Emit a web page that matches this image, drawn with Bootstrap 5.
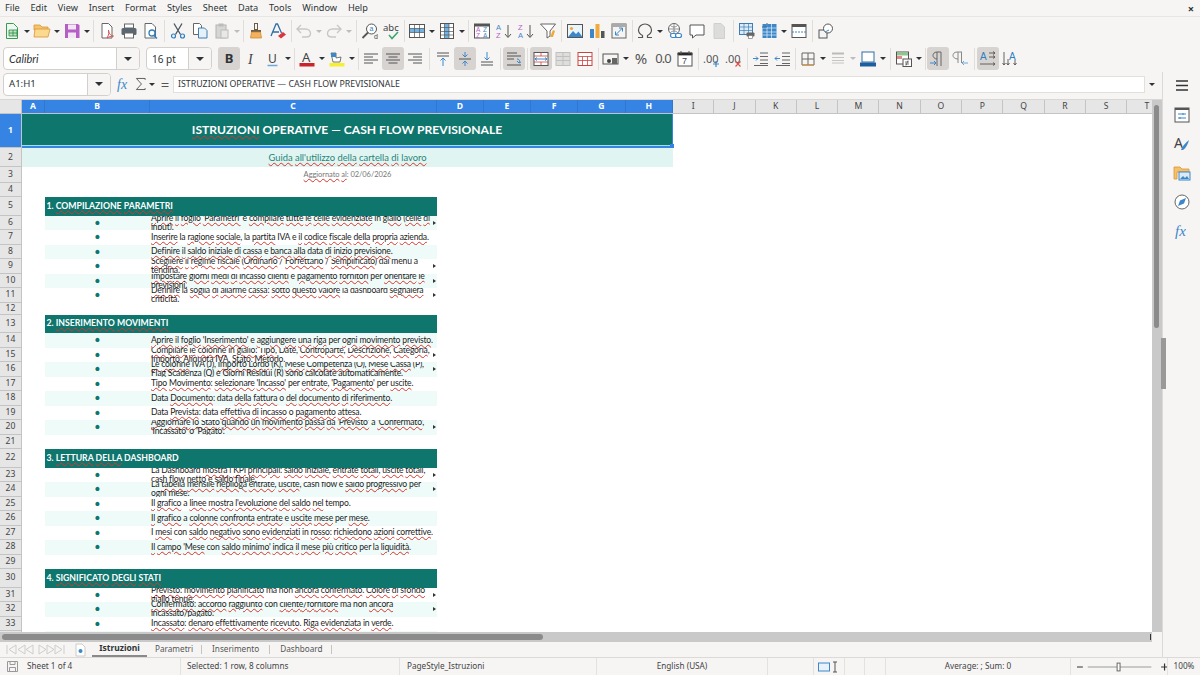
<!DOCTYPE html>
<html lang="it">
<head>
<meta charset="UTF-8">
<title>Cash flow previsionale</title>
<link href="https://cdn.jsdelivr.net/npm/bootstrap@5.3.0/dist/css/bootstrap.min.css" rel="stylesheet">
<style>
html,body{margin:0;height:675px;overflow:hidden;background:#f6f5f4}
body{font-family:"Noto Sans",sans-serif;font-size:10px;color:#2e3436;line-height:1}
.shell{width:1200px;height:675px}
.menu-bar{height:17px;padding-left:5px;gap:10.8px;border-bottom:1px solid #e8e6e3;font-size:9.2px}
.menu-close{margin-left:auto;margin-right:6px;font-size:11px;font-weight:700}
.tool-1{height:28px;padding-left:1px}
.tool-2{height:27px;padding-left:3px}
.ti{width:22px;height:23px;flex:none;display:flex;align-items:center;justify-content:center;border-radius:3px}
.ti svg{width:18px;height:18px}
.ti.on{background:#d6d3d0}
.ta{width:8px;flex:none;display:flex;justify-content:center}
.ta::after{content:"";border:3px solid transparent;border-top:3.5px solid #2e3436;border-bottom:0}
.ta.off::after{border-top-color:#bdbcba}
.ts{flex:none;width:5px;display:flex;justify-content:center;height:22px}
.ts::after{content:"";width:1px;background:#e0dedb}
.ts4{width:4px}.ts6{width:6px}.ts3{width:3px}
.combo{height:23px;background:#fff;border:1px solid #d3cfcb;border-radius:4px;flex:none;overflow:hidden}
.combo-text{flex:1;padding-left:5px;font-size:10px}
.combo-arrow{width:23px;height:100%;background:#f6f5f4;border-left:1px solid #d3cfcb;display:flex;align-items:center;justify-content:center}
.combo-arrow::after{content:"";border:4px solid transparent;border-top:4px solid #2e3436;border-bottom:0}
.font-box{width:137px}.size-box{width:66px;margin-left:6px;margin-right:6px}
.calibri{font-family:Lato,sans-serif;font-style:italic;font-size:11px}
.name-box{width:108px;margin-left:3px}
.formula-bar{height:28px;flex:none;padding-bottom:3px;border-bottom:1px solid #d9d7d4}
.formula-input{width:972px;height:17px;background:#fff;border:1px solid #e2e0dd;font-size:8.8px;padding-left:4px;flex:none;display:flex;align-items:center;white-space:nowrap}
.fb{flex:none;display:flex;align-items:center;justify-content:center}
.left-col{width:1162px;flex:none}
.side-bar{width:38px;flex:none;border-left:1px solid #dcdad7}
.side-icon{height:29.2px;flex:none;display:flex;align-items:center;justify-content:center}
.side-icon:first-child{height:28px}
.side-icon svg{width:18px;height:18px}
.sheet-wrap{height:532px;flex:none;overflow:hidden;position:relative}
.sheet-grid{width:1152px;background:#fff;flex:none;overflow:hidden}
.col-head{height:14px;flex:none;font-size:8.6px;color:#444;background:#e6e6e6;border-bottom:1px solid #c4c4c4}
.ch{flex:none;height:100%;display:flex;align-items:center;justify-content:center;border-right:1px solid #c4c4c4}
.ch.sel{background:#3584e4;color:#fff;font-weight:700;border-right:1px solid #3077d0}
.corner{width:22px}
.rw{display:flex;height:14.5px;flex:none;overflow:hidden}
.rh{width:22px;flex:none;background:#e6e6e6;border-right:1px solid #c4c4c4;border-bottom:1px solid #c4c4c4;display:flex;align-items:center;justify-content:center;font-size:8.6px;color:#444}
.rh.sel{background:#3584e4;color:#fff;font-weight:700}
.r34{height:34px}.r19{height:19px}.r16{height:16px}.r14{height:14px}.r18{height:18.5px}.r12{height:12px}
.ca{width:23px;flex:none}
.cb{width:105px;flex:none;text-align:center;color:#0f766e;font-size:14px;display:flex;align-items:center;justify-content:center;font-family:"DejaVu Sans",sans-serif}
.cc{width:287px;flex:none;font-family:Lato,sans-serif;font-size:8.6px;line-height:9.2px;letter-spacing:-.2px;color:#1c1c1c;display:flex;align-items:center;padding-left:1px;white-space:nowrap;overflow:hidden;position:relative}
.st .cb,.st .cc{background:#effbf9}
.clip::after{content:"";position:absolute;right:1px;top:5px;border:2.5px solid transparent;border-left:3px solid #333;border-right:0}
.head-cell{width:392px;flex:none;background:#0f766e;color:#fff;font-family:Lato,sans-serif;font-weight:700;font-size:8.7px;display:flex;align-items:center;padding-left:1.5px;white-space:nowrap}
.title-cell{width:651px;flex:none;background:#0f766e;color:#fff;font-family:Lato,sans-serif;font-weight:700;font-size:12.1px;display:flex;align-items:center;justify-content:center;border-bottom:2px solid #3584e4;border-right:1px solid #3584e4;box-shadow:inset 0 -1px 0 #9fe0e8;position:relative}
.title-cell::after{content:"";position:absolute;right:-2px;bottom:-2px;width:4px;height:4px;background:#3584e4}
.sub-cell{width:651px;flex:none;background:#e0f5f2;color:#1f8377;font-family:Lato,sans-serif;font-size:9.35px;display:flex;align-items:center;justify-content:center}
.date-cell{width:651px;flex:none;color:#777;font-family:Lato,sans-serif;font-size:7.5px;letter-spacing:-.06px;display:flex;align-items:center;justify-content:center}
u{text-decoration:underline wavy #d9342b 1px;text-underline-offset:1px}
.v-scroll{width:10px;flex:none;background:#c9c9c9;position:relative}
.v-thumb{position:absolute;left:2px;width:5px;top:5px;height:223px;background:#8b8b8b;border-radius:3px}
.drag-handle{position:absolute;left:1161px;top:338px;width:5px;height:51px;background:#999;z-index:3}
.h-scroll{height:10px;flex:none;background:#c9c9c9;width:1152px;position:relative}
.h-thumb{position:absolute;left:2px;top:2px;width:541px;height:6px;background:#8b8b8b;border-radius:3px}
.h-end{position:absolute;right:1px;top:2px;width:1px;height:6px;background:#333}
.tab-bar{height:15px;flex:none;font-size:8.2px;padding-left:6px}
.tab-nav{width:63px;flex:none;display:flex}
.tab-add{width:23px;flex:none;display:flex;justify-content:center}
.sheet-tab{height:15px;display:flex;align-items:center;color:#555}
.sheet-tab.now{font-weight:700;font-size:8.5px;color:#2e3436;border-bottom:2px solid #8a8a8a;width:55px;justify-content:center}
.tab-sep{width:1px;height:9px;background:#c6c4c1;flex:none}
.status-bar{height:18px;flex:none;border-top:1px solid #dcdad7;font-size:8.2px;color:#444}
.sc{height:100%;flex:none;display:flex;align-items:center;border-right:1px solid #e4e2df;white-space:nowrap;overflow:hidden}
.main-row{height:585px;flex:none}
.glyph-b{font-size:13px}
.glyph-pct{font-size:15px;color:#555}
.glyph-num{font-size:13px;color:#555;letter-spacing:-1px}
.name-text{font-size:9.6px}
.fx-btn{width:22px;margin-left:2px}
.sum-btn{width:12px}
.sum-arrow{width:10px}
.eq-btn{width:16px;font-size:15px;color:#555}
.fx-more{width:14px}
.w-a{width:23px}.w-b{width:105px}.w-c{width:287px}.w-d{width:47px}.w-g{width:47.5px}.w-i{width:41.3px}
.w-t{width:26px;justify-content:flex-end;padding-right:4px;border-right:0}
.tab-p{margin-left:8px;margin-right:8px}
.tab-i{margin-left:10px;margin-right:10px}
.tab-d{margin-left:10px;margin-right:8px}
.st-1{width:181px;padding-left:6px;gap:8px}
.st-2{width:219px;padding-left:6px}
.st-3{width:197px;padding-left:7px}
.st-4{width:171px}
.st-5{width:46px}
.st-6{width:31px}
.st-7{width:20px}
.st-8{width:21px}
.st-9{width:185px}
.st-10{width:97px;padding-left:6px}
.st-11{width:32px;border-right:0}
</style>
</head>
<body>
<div class="shell d-flex flex-column">
  <nav class="menu-bar d-flex align-items-center">
    <span>File</span><span>Edit</span><span>View</span><span>Insert</span><span>Format</span><span>Styles</span><span>Sheet</span><span>Data</span><span>Tools</span><span>Window</span><span>Help</span>
    <span class="menu-close">×</span>
  </nav>

  <div class="tool-1 d-flex align-items-center">
    <span class="ti"><svg viewBox="0 0 18 18"><path d="M3.5 1.500h7l4 4v11h-11z" fill="#eef7f0" stroke="#3a9a4e"/><path d="M6 8h8v6H6zM6 11h8M10 8v6" fill="#bfe3c6" stroke="#2f8a43" stroke-width=".8"/></svg></span><span class="ta"></span>
    <span class="ti"><svg viewBox="0 0 18 18"><path d="M1 5V3h6l2 2h6v3H1z" fill="#f4c56b" stroke="#d9953a" stroke-width=".8"/><path d="M1 15l1-8h15l-2 8z" fill="#fbd98f" stroke="#d9953a" stroke-width=".8"/></svg></span><span class="ta"></span>
    <span class="ti"><svg viewBox="0 0 18 18"><path d="M2 2h13l1.500 1.500V16H2z" fill="#b45fc4"/><rect x="5" y="2.500" width="8" height="5" fill="#f3e5f6"/><rect x="5" y="10.500" width="8" height="5.500" fill="#f3e5f6"/></svg></span><span class="ta"></span>
    <span class="ts"></span>
    <span class="ti"><svg viewBox="0 0 18 18"><path d="M4 1.500h6.500l3.500 3.500v11H4z" fill="#fff" stroke="#666"/><path d="M9 16c2-3 2-6 1.500-8 0 3 2 6 5 6-2 0-5 1-6.500 2z" fill="none" stroke="#d9534f"/></svg></span>
    <span class="ti"><svg viewBox="0 0 18 18"><rect x="4.500" y="2" width="9" height="4" fill="#fff" stroke="#666"/><rect x="1.500" y="6" width="15" height="7" rx="1.500" fill="#5b6770"/><rect x="4.500" y="11" width="9" height="5" fill="#fff" stroke="#666"/></svg></span>
    <span class="ti"><svg viewBox="0 0 18 18"><path d="M3 1.500h7l3.500 3.500v11H3z" fill="#fff" stroke="#666"/><circle cx="10" cy="11" r="3" fill="none" stroke="#2f7fc1" stroke-width="1.300"/><path d="M12 13.500l3 3" stroke="#2f7fc1" stroke-width="1.500"/></svg></span>
    <span class="ts"></span>
    <span class="ti"><svg viewBox="0 0 18 18"><path d="M5 1.500l6.500 11M13 1.500l-6.500 11" stroke="#4a5560" stroke-width="1.300"/><circle cx="4.500" cy="14" r="2" fill="none" stroke="#2f7fc1" stroke-width="1.200"/><circle cx="13.500" cy="14" r="2" fill="none" stroke="#2f7fc1" stroke-width="1.200"/></svg></span>
    <span class="ti"><svg viewBox="0 0 18 18"><path d="M2.500 1.500h6l2 2v9h-8z" fill="#fff" stroke="#666"/><path d="M7.500 6h6l2.500 2.500v7.500H7.500z" fill="#e5f0f9" stroke="#3d7fb5"/></svg></span>
    <span class="ti"><svg viewBox="0 0 18 18"><rect x="3" y="3" width="10" height="13" fill="#d6d6d4" stroke="#b4b4b2"/><rect x="5.500" y="1.500" width="5" height="3" fill="#bcbcba"/><rect x="8" y="8" width="7" height="8" fill="#e8e8e6" stroke="#bcbcba"/></svg></span><span class="ta off"></span>
    <span class="ts ts4"></span>
    <span class="ti"><svg viewBox="0 0 18 18"><rect x="7.500" y="1.500" width="3" height="6" fill="none" stroke="#6b5c48"/><path d="M4 8h10v2H4z" fill="#6b5c48"/><path d="M4.500 10h9l1 6h-11z" fill="#f2b25f" stroke="#c98526" stroke-width=".7"/></svg></span>
    <span class="ti"><svg viewBox="0 0 18 18"><path d="M2 14L7 2h1.500l4 9M4 10h6" fill="none" stroke="#2f6ea5" stroke-width="1.300"/><path d="M9 14l5-4 3 2.500-5 4z" fill="#d9363e"/></svg></span>
    <span class="ts ts4"></span>
    <span class="ti"><svg viewBox="0 0 18 18"><path d="M6 3L2 7l4 4M2.500 7h8c3 0 5 2 5 4.500S13.500 15 11 15H7" fill="none" stroke="#c8c8c6" stroke-width="1.400"/></svg></span><span class="ta off"></span>
    <span class="ti"><svg viewBox="0 0 18 18"><path d="M12 3l4 4-4 4M15.500 7h-8c-3 0-5 2-5 4.500S4.500 15 7 15h4" fill="none" stroke="#c8c8c6" stroke-width="1.400"/></svg></span><span class="ta off"></span>
    <span class="ts ts6"></span>
    <span class="ti"><svg viewBox="0 0 18 18"><circle cx="10.500" cy="7" r="5" fill="#fff" stroke="#555"/><path d="M7 10.500L1.500 16" stroke="#555" stroke-width="1.800"/><text x="8.500" y="9" font-size="7" font-family="Liberation Sans" fill="#2f7fc1">a</text><text x="13" y="17" font-size="7" font-family="Liberation Sans" fill="#444">d</text></svg></span>
    <span class="ti"><svg viewBox="0 0 18 18"><text x="0" y="9" font-size="9.500" font-family="Noto Sans" fill="#444">abc</text><path d="M6 13l3 3.500L15 10" fill="none" stroke="#3aa66a" stroke-width="1.500"/></svg></span>
    <span class="ts ts3"></span>
    <span class="ti"><svg viewBox="0 0 18 18"><rect x="1.500" y="2.500" width="15" height="13" fill="#fff" stroke="#555"/><rect x="2" y="6.500" width="14" height="4" fill="#6fb2e6"/><path d="M1.500 6.500h15M1.500 10.500h15M6.500 2.500v13M11.500 2.500v13" stroke="#555" stroke-width=".7"/></svg></span><span class="ta"></span>
    <span class="ti"><svg viewBox="0 0 18 18"><rect x="2.500" y="1.500" width="13" height="15" fill="#fff" stroke="#555"/><rect x="6.500" y="2" width="4.500" height="14" fill="#6fb2e6"/><path d="M2.500 5.500h13M2.500 9.500h13M2.500 13h13M6.500 1.500v15M11 1.500v15" stroke="#555" stroke-width=".7"/></svg></span><span class="ta"></span>
    <span class="ts"></span>
    <span class="ti"><svg viewBox="0 0 18 18"><rect x="1.500" y="2" width="15" height="14" fill="#fff" stroke="#555"/><rect x="1.500" y="2" width="15" height="2.500" fill="#555"/><text x="3" y="10" font-size="6.500" font-family="Liberation Sans" fill="#b45fc4">A</text><text x="3" y="15.500" font-size="6.500" font-family="Liberation Sans" fill="#b45fc4">Z</text><text x="10" y="10" font-size="6.500" font-family="Liberation Sans" fill="#3d87c9">Z</text><text x="10" y="15.500" font-size="6.500" font-family="Liberation Sans" fill="#3d87c9">A</text></svg></span>
    <span class="ti"><svg viewBox="0 0 18 18"><text x="1" y="8" font-size="7.500" font-family="Liberation Sans" fill="#3d87c9">A</text><text x="1" y="16" font-size="7.500" font-family="Liberation Sans" fill="#b45fc4">Z</text><path d="M13 3v12M10 12l3 3.500 3-3.500" fill="none" stroke="#555"/></svg></span>
    <span class="ti"><svg viewBox="0 0 18 18"><text x="1" y="8" font-size="7.500" font-family="Liberation Sans" fill="#b45fc4">Z</text><text x="1" y="16" font-size="7.500" font-family="Liberation Sans" fill="#3d87c9">A</text><path d="M13 3v12M10 12l3 3.500 3-3.500" fill="none" stroke="#555"/></svg></span>
    <span class="ti"><svg viewBox="0 0 18 18"><path d="M1.500 2h15L11 9v5l-3 2V9z" fill="#fff" stroke="#666"/><path d="M11 15l3-7 2 1-2 6z" fill="#f0a93c"/></svg></span>
    <span class="ts"></span>
    <span class="ti"><svg viewBox="0 0 18 18"><rect x="1.500" y="2.500" width="15" height="13" fill="#eaf4fb" stroke="#555"/><circle cx="5.500" cy="6.500" r="1.600" fill="#f0a93c"/><path d="M2 15l5-6 3 3 2.500-2.500 4 5.500z" fill="#3d87c9"/></svg></span>
    <span class="ti"><svg viewBox="0 0 18 18"><rect x="2" y="7" width="4" height="9" fill="#3d87c9"/><rect x="7.500" y="2" width="4" height="14" fill="#f0a93c"/><rect x="13" y="9" width="3.500" height="7" fill="#555"/></svg></span>
    <span class="ti"><svg viewBox="0 0 18 18"><rect x="2" y="2" width="14" height="14" fill="#f4f4f2" stroke="#666"/><rect x="2" y="2" width="14" height="3" fill="#aaa"/><path d="M5.500 13l7-7M9 6h3.500v3.500M9 13H5.500V9.500" fill="none" stroke="#3d87c9"/></svg></span>
    <span class="ts ts4"></span>
    <span class="ti"><svg viewBox="0 0 18 18"><path d="M2 15.500h4.500v-2C3.500 12 2.500 10 2.500 8c0-3.500 3-6 6.500-6s6.500 2.500 6.500 6c0 2-1 4-4 5.500v2H16" fill="none" stroke="#555" stroke-width="1.200"/></svg></span><span class="ta"></span>
    <span class="ti"><svg viewBox="0 0 18 18"><circle cx="8" cy="7" r="5.500" fill="#fff" stroke="#666"/><path d="M2.500 7h11M8 1.500v11M4.500 3.500c2 2 5 2 7 0M4.500 10.500c2-2 5-2 7 0" fill="none" stroke="#666" stroke-width=".7"/><rect x="4.500" y="11.500" width="6" height="4" rx="2" fill="#fff" stroke="#3d87c9" stroke-width="1.200"/><rect x="9.500" y="11.500" width="6" height="4" rx="2" fill="#fff" stroke="#3d87c9" stroke-width="1.200"/></svg></span>
    <span class="ti"><svg viewBox="0 0 18 18"><path d="M2 3h14v10H8l-3.500 3v-3H2z" fill="#fff" stroke="#555"/></svg></span>
    <span class="ti"><svg viewBox="0 0 18 18"><path d="M4 1.500h7l3.500 3.500v11.500H4z" fill="#dcdcda" stroke="#cfcfcd"/></svg></span>
    <span class="ts ts6"></span>
    <span class="ti"><svg viewBox="0 0 18 18"><rect x="1.500" y="1.500" width="13" height="11" fill="#dcebf7" stroke="#3d7fb5"/><path d="M1.500 5h13M1.500 8.500h13M6 1.500v11M10.500 1.500v11" stroke="#3d7fb5" stroke-width=".7"/><rect x="8.500" y="10.500" width="8" height="4" rx="1" fill="#666"/><rect x="10.500" y="13.500" width="4" height="3" fill="#fff" stroke="#666" stroke-width=".6"/></svg></span>
    <span class="ti"><svg viewBox="0 0 18 18"><rect x="2.500" y="2" width="14" height="14" fill="#3d87c9"/><path d="M2.500 6h14M2.500 10h14M2.500 13h14M7 2v14M11.500 2v14" stroke="#e5f0f9" stroke-width=".7"/><path d="M2 5h5V1" fill="none" stroke="#2c6ca3"/></svg></span><span class="ta"></span>
    <span class="ti"><svg viewBox="0 0 18 18"><rect x="2" y="2.500" width="14" height="13" fill="#fff" stroke="#555"/><rect x="2" y="2.500" width="14" height="2.500" fill="#555"/><path d="M2 10h14" stroke="#3d87c9" stroke-dasharray="2 1"/></svg></span>
    <span class="ts"></span>
    <span class="ti"><svg viewBox="0 0 18 18"><rect x="2" y="8" width="8" height="8" fill="none" stroke="#555"/><circle cx="11" cy="6.500" r="4.500" fill="#fff" stroke="#555"/><path d="M8 10l4-2" stroke="#3d87c9"/></svg></span>
  </div>

  <div class="tool-2 d-flex align-items-center">
    <div class="combo font-box d-flex align-items-center"><span class="combo-text calibri">Calibri</span><span class="combo-arrow"></span></div>
    <div class="combo size-box d-flex align-items-center"><span class="combo-text">16 pt</span><span class="combo-arrow"></span></div>
    <span class="ti on"><b class="glyph-b">B</b></span>
    <span class="ti"><svg viewBox="0 0 18 18"><text x="6" y="14" font-size="14" font-style="italic" font-family="Liberation Serif" fill="#444">I</text></svg></span>
    <span class="ti"><svg viewBox="0 0 18 18"><text x="4" y="12.500" font-size="12" font-family="Noto Sans" fill="#444">U</text><path d="M3.500 15.500h10" stroke="#6fa8d9" stroke-width="1.500"/></svg></span><span class="ta"></span>
    <span class="ts ts4"></span>
    <span class="ti"><svg viewBox="0 0 18 18"><text x="4" y="12" font-size="13" font-family="Noto Sans" fill="#444">A</text><rect x="1.500" y="13" width="15" height="3.500" fill="#c9242b"/></svg></span><span class="ta"></span>
    <span class="ti"><svg viewBox="0 0 18 18"><path d="M3 3h5v5l5-1-1 5H5z" fill="#fff" stroke="#555" stroke-width=".8"/><path d="M3 3h5v4H3z" fill="#3d87c9"/><rect x="1.500" y="13" width="15" height="3.500" fill="#f6ee2e"/></svg></span><span class="ta"></span>
    <span class="ts ts4"></span>
    <span class="ti"><svg viewBox="0 0 18 18"><path d="M2 4h14M2 7h9M2 10h14M2 13h9" stroke="#555"/></svg></span>
    <span class="ti on"><svg viewBox="0 0 18 18"><path d="M2 4h14M4.500 7h9M2 10h14M4.500 13h9" stroke="#555"/></svg></span>
    <span class="ti"><svg viewBox="0 0 18 18"><path d="M2 4h14M7 7h9M2 10h14M7 13h9" stroke="#555"/></svg></span>
    <span class="ts ts6"></span>
    <span class="ti"><svg viewBox="0 0 18 18"><path d="M3 3h12M3 6h12" stroke="#555"/><path d="M9 16V8M6.500 10.500L9 8l2.500 2.500" fill="none" stroke="#3d87c9"/></svg></span>
    <span class="ti on"><svg viewBox="0 0 18 18"><path d="M3 9h12" stroke="#555"/><path d="M9 2v5M6.500 4.500L9 7l2.500-2.500M9 16v-5M6.500 13.500L9 11l2.500 2.500" fill="none" stroke="#3d87c9"/></svg></span>
    <span class="ti"><svg viewBox="0 0 18 18"><path d="M3 12h12M3 15h12" stroke="#555"/><path d="M9 2v8M6.500 7.500L9 10l2.500-2.500" fill="none" stroke="#3d87c9"/></svg></span>
    <span class="ts"></span>
    <span class="ti on"><svg viewBox="0 0 18 18"><path d="M2 3h10M2 6h14M2 9h7M2 15h14" stroke="#555"/><path d="M12 9c3 0 3 3 2 4M12 11l2 2 2-1" fill="none" stroke="#3d87c9"/></svg></span>
    <span class="ts"></span>
    <span class="ti on"><svg viewBox="0 0 18 18"><rect x="2" y="2.500" width="14" height="13" fill="#fff" stroke="#555"/><path d="M2 6h14M2 12h14M9 2.500V6M9 12v3.500" stroke="#c9453f" stroke-width=".8"/><path d="M3 9h12M5 7.500L3 9l2 1.500M13 7.500L15 9l-2 1.500" fill="none" stroke="#3d87c9"/></svg></span>
    <span class="ti"><svg viewBox="0 0 18 18"><rect x="2" y="2.500" width="14" height="13" fill="#dededc" stroke="#c0c0be"/><path d="M2 6.500h14M2 10.500h14M9 2.500v13" stroke="#c0c0be"/></svg></span>
    <span class="ti"><svg viewBox="0 0 18 18"><rect x="2" y="2.500" width="14" height="13" fill="#fff" stroke="#c9453f"/><path d="M2 6.500h14M2 10.500h14M6.500 6.500v9M11.500 6.500v9" stroke="#c9453f" stroke-width=".8"/></svg></span>
    <span class="ts ts4"></span>
    <span class="ti"><svg viewBox="0 0 18 18"><rect x="1" y="4" width="15" height="10" fill="none" stroke="#555"/><circle cx="7" cy="11" r="2" fill="#444"/><rect x="10" y="8" width="5" height="6" fill="#666"/></svg></span><span class="ta"></span>
    <span class="ti glyph-pct">%</span>
    <span class="ti glyph-num">0.0</span>
    <span class="ti"><svg viewBox="0 0 18 18"><rect x="2" y="3" width="14" height="13" fill="#fff" stroke="#555"/><path d="M2 3h14v2H2zM5 1v3M13 1v3" stroke="#555"/><text x="6" y="14" font-size="9" font-family="Liberation Sans" fill="#444">7</text></svg></span>
    <span class="ts"></span>
    <span class="ti"><svg viewBox="0 0 18 18"><text x="0" y="13" font-size="11" font-family="Noto Sans" fill="#555">.00</text><path d="M13 11v6M10 14h6" stroke="#3d87c9" stroke-width="1.200"/></svg></span>
    <span class="ti"><svg viewBox="0 0 18 18"><text x="0" y="13" font-size="11" font-family="Noto Sans" fill="#555">.00</text><path d="M10.500 11.500l5 5M15.500 11.500l-5 5" stroke="#d9534f" stroke-width="1.200"/></svg></span>
    <span class="ts"></span>
    <span class="ti"><svg viewBox="0 0 18 18"><path d="M8 3h8M8 6.500h8M8 10h8M8 13.500h8M2 15.500h14" fill="none" stroke="#555" stroke-width=".9"/><path d="M1 8.500h5M4 6.500l2 2-2 2" fill="none" stroke="#3d87c9"/></svg></span>
    <span class="ti"><svg viewBox="0 0 18 18"><path d="M8 3h8M8 6.500h8M8 10h8M8 13.500h8M2 15.500h14" fill="none" stroke="#555" stroke-width=".9"/><path d="M1 8.500h5M3 6.500l-2 2 2 2" fill="none" stroke="#3d87c9"/></svg></span>
    <span class="ts ts3"></span>
    <span class="ti"><svg viewBox="0 0 18 18"><path d="M3 3h12v12H3zM9 3v12M3 9h12" fill="none" stroke="#666"/><path d="M3 15h12" stroke="#d9953a"/></svg></span><span class="ta"></span>
    <span class="ti"><svg viewBox="0 0 18 18"><path d="M3 3.500h12" stroke="#bbb" stroke-width="2"/><path d="M3 7.500h12M3 10.500h12M3 13h12" stroke="#c4c4c2"/></svg></span><span class="ta off"></span>
    <span class="ti"><svg viewBox="0 0 18 18"><rect x="3" y="2" width="12" height="10" fill="#fff" stroke="#2f6ea5"/><rect x="1" y="12.500" width="16" height="4" fill="#1c5f9e"/></svg></span><span class="ta"></span>
    <span class="ts ts6"></span>
    <span class="ti"><svg viewBox="0 0 18 18"><rect x="1.500" y="2" width="12" height="12" fill="#fff" stroke="#555"/><rect x="2" y="2.500" width="11" height="3" fill="#8dc78f"/><rect x="2" y="6" width="5" height="3" fill="#e08a84"/><rect x="8" y="9" width="8.500" height="7.500" fill="#fff" stroke="#555"/><path d="M10 12h4M10 14h4M13 10.500l-2 5" stroke="#444" stroke-width=".7"/></svg></span><span class="ta"></span>
    <span class="ts ts4"></span>
    <span class="ti on"><svg viewBox="0 0 18 18"><path d="M8 16V2M12 16V2M12 2H8C5 2 4 4 4 5.500S5.500 9 8 9" fill="none" stroke="#666"/><path d="M1 13h6M5 11l2 2-2 2" fill="none" stroke="#3d87c9"/></svg></span>
    <span class="ti"><svg viewBox="0 0 18 18"><path d="M7 13V2M10.500 13V2M11 2H6C3 2 2 4 2 5.500S3.500 9 7 9" fill="none" stroke="#888"/><path d="M11 13h6M13 11l-2 2 2 2" fill="none" stroke="#6fa8d9"/></svg></span>
    <span class="ts ts6"></span>
    <span class="ti on"><svg viewBox="0 0 18 18"><text x="1" y="10" font-size="10" font-family="Liberation Sans" fill="#2f7fc1">A</text><path d="M10 3h6M14 1.500L16 3l-2 1.500M10 7h6M14 5.500L16 7l-2 1.500M1 14h15M14 12.500l2 1.500-2 1.500" fill="none" stroke="#555" stroke-width=".9"/></svg></span>
    <span class="ti"><svg viewBox="0 0 18 18"><text x="8" y="10" font-size="10" font-family="Liberation Sans" fill="#2f7fc1">A</text><path d="M3 2v13M1.500 13L3 15l1.500-2M7 9v6M5.500 13L7 15l1.500-2M14 10v5M12.500 13l1.500 2 1.500-2" fill="none" stroke="#555" stroke-width=".9"/></svg></span>
  </div>

  <div class="d-flex main-row">
    <div class="left-col d-flex flex-column">
      <div class="formula-bar d-flex align-items-center">
        <div class="combo name-box d-flex align-items-center"><span class="combo-text name-text">A1:H1</span><span class="combo-arrow"></span></div>
        <span class="fb fx-btn"><svg width="18" height="18" viewBox="0 0 18 18"><text x="2" y="14" font-size="14" font-style="italic" font-family="Liberation Serif" fill="#3d87c9">fx</text></svg></span>
        <span class="fb sum-btn"><svg width="13" height="14" viewBox="0 0 13 14"><path d="M11 2.500V1H1.500L7 7l-5.500 6H11v-1.500" fill="none" stroke="#555"/></svg></span>
        <span class="ta sum-arrow"></span>
        <span class="fb eq-btn">=</span>
        <span class="formula-input">ISTRUZIONI OPERATIVE — CASH FLOW PREVISIONALE</span>
        <span class="ta fx-more"></span>
      </div>
      <div class="sheet-wrap d-flex">
        <div class="sheet-grid d-flex flex-column">
          <div class="col-head d-flex">
            <div class="ch corner"></div>
            <div class="ch sel w-a">A</div><div class="ch sel w-b">B</div><div class="ch sel w-c">C</div><div class="ch sel w-d">D</div><div class="ch sel w-d">E</div><div class="ch sel w-d">F</div><div class="ch sel w-g">G</div><div class="ch sel w-g">H</div>
            <div class="ch w-i">I</div><div class="ch w-i">J</div><div class="ch w-i">K</div><div class="ch w-i">L</div><div class="ch w-i">M</div><div class="ch w-i">N</div><div class="ch w-i">O</div><div class="ch w-i">P</div><div class="ch w-i">Q</div><div class="ch w-i">R</div><div class="ch w-i">S</div><div class="ch w-t">T</div>
          </div>

          <div class="rw r34"><div class="rh sel">1</div><div class="title-cell"><span><u>ISTRUZIONI</u> OPERATIVE — CASH FLOW PREVISIONALE</span></div></div>
          <div class="rw r19"><div class="rh">2</div><div class="sub-cell"><span><u>Guida</u> <u>all'utilizzo</u> <u>della</u> <u>cartella</u> <u>di</u> <u>lavoro</u></span></div></div>
          <div class="rw r16"><div class="rh">3</div><div class="date-cell"><span><u>Aggiornato</u> <u>al</u>: 02/06/2026</span></div></div>
          <div class="rw r14"><div class="rh">4</div></div>

          <div class="rw r18"><div class="rh">5</div><div class="ca"></div><div class="head-cell"><span>1. <u>COMPILAZIONE</u> <u>PARAMETRI</u></span></div></div>
          <div class="rw st"><div class="rh">6</div><div class="ca"></div><div class="cb">•</div><div class="cc clip"><span><u>Aprire</u> <u>il</u> <u>foglio</u> <u>'Parametri'</u> e <u>compilare</u> <u>tutte</u> <u>le</u> <u>celle</u> <u>evidenziate</u> in <u>giallo</u> (<u>celle</u> <u>di</u><br>input).</span></div></div>
          <div class="rw"><div class="rh">7</div><div class="ca"></div><div class="cb">•</div><div class="cc"><span><u>Inserire</u> la <u>ragione</u> <u>sociale</u>, la <u>partita</u> IVA e <u>il</u> <u>codice</u> <u>fiscale</u> <u>della</u> <u>propria</u> <u>azienda</u>.</span></div></div>
          <div class="rw st"><div class="rh">8</div><div class="ca"></div><div class="cb">•</div><div class="cc"><span><u>Definire</u> <u>il</u> <u>saldo</u> <u>iniziale</u> <u>di</u> <u>cassa</u> e <u>banca</u> <u>alla</u> data <u>di</u> <u>inizio</u> <u>previsione</u>.</span></div></div>
          <div class="rw"><div class="rh">9</div><div class="ca"></div><div class="cb">•</div><div class="cc clip"><span><u>Scegliere</u> <u>il</u> <u>regime</u> <u>fiscale</u> (<u>Ordinario</u> / <u>Forfettario</u> / <u>Semplificato</u>) dal menu a<br><u>tendina</u>.</span></div></div>
          <div class="rw st"><div class="rh">10</div><div class="ca"></div><div class="cb">•</div><div class="cc clip"><span><u>Impostare</u> <u>giorni</u> <u>medi</u> <u>di</u> <u>incasso</u> <u>clienti</u> e <u>pagamento</u> <u>fornitori</u> per <u>orientare</u> <u>le</u><br><u>previsioni</u>.</span></div></div>
          <div class="rw"><div class="rh">11</div><div class="ca"></div><div class="cb">•</div><div class="cc clip"><span><u>Definire</u> la <u>soglia</u> <u>di</u> <u>allarme</u> <u>cassa</u>: <u>sotto</u> <u>questo</u> <u>valore</u> la dashboard <u>segnalerà</u><br><u>criticità</u>.</span></div></div>
          <div class="rw r12"><div class="rh">12</div></div>

          <div class="rw r18"><div class="rh">13</div><div class="ca"></div><div class="head-cell"><span>2. <u>INSERIMENTO</u> <u>MOVIMENTI</u></span></div></div>
          <div class="rw st"><div class="rh">14</div><div class="ca"></div><div class="cb">•</div><div class="cc"><span><u>Aprire</u> <u>il</u> <u>foglio</u> <u>'Inserimento'</u> e <u>aggiungere</u> <u>una</u> <u>riga</u> per <u>ogni</u> <u>movimento</u> <u>previsto</u>.</span></div></div>
          <div class="rw"><div class="rh">15</div><div class="ca"></div><div class="cb">•</div><div class="cc clip"><span><u>Compilare</u> <u>le</u> <u>colonne</u> in <u>giallo</u>: <u>Tipo</u>, Date, <u>Controparte</u>, <u>Descrizione</u>, <u>Categoria</u>,<br><u>Importo</u>, <u>Aliquota</u> IVA, <u>Stato</u>, <u>Metodo</u>.</span></div></div>
          <div class="rw st"><div class="rh">16</div><div class="ca"></div><div class="cb">•</div><div class="cc clip"><span><u>Le</u> <u>colonne</u> IVA (J), <u>Importo</u> <u>Lordo</u> (K), <u>Mese</u> <u>Competenza</u> (O), <u>Mese</u> <u>Cassa</u> (P),<br><u>Flag</u> <u>Scadenza</u> (Q) e <u>Giorni</u> <u>Residui</u> (R) <u>sono</u> <u>calcolate</u> <u>automaticamente</u>.</span></div></div>
          <div class="rw"><div class="rh">17</div><div class="ca"></div><div class="cb">•</div><div class="cc"><span><u>Tipo</u> <u>Movimento</u>: <u>selezionare</u> <u>'Incasso'</u> per <u>entrate</u>, <u>'Pagamento'</u> per <u>uscite</u>.</span></div></div>
          <div class="rw st"><div class="rh">18</div><div class="ca"></div><div class="cb">•</div><div class="cc"><span>Data <u>Documento</u>: data <u>della</u> <u>fattura</u> o <u>del</u> <u>documento</u> <u>di</u> <u>riferimento</u>.</span></div></div>
          <div class="rw"><div class="rh">19</div><div class="ca"></div><div class="cb">•</div><div class="cc"><span>Data <u>Prevista</u>: data <u>effettiva</u> <u>di</u> <u>incasso</u> o <u>pagamento</u> <u>attesa</u>.</span></div></div>
          <div class="rw st"><div class="rh">20</div><div class="ca"></div><div class="cb">•</div><div class="cc clip"><span><u>Aggiornare</u> <u>lo</u> <u>Stato</u> <u>quando</u> <u>un</u> <u>movimento</u> <u>passa</u> <u>da</u> <u>'Previsto'</u> a <u>'Confermato'</u>,<br><u>'Incassato'</u> o <u>'Pagato'</u>.</span></div></div>
          <div class="rw"><div class="rh">21</div></div>

          <div class="rw r18"><div class="rh">22</div><div class="ca"></div><div class="head-cell"><span>3. <u>LETTURA</u> <u>DELLA</u> DASHBOARD</span></div></div>
          <div class="rw"><div class="rh">23</div><div class="ca"></div><div class="cb">•</div><div class="cc clip"><span>La Dashboard <u>mostra</u> <u>i</u> <u>KPI</u> <u>principali</u>: <u>saldo</u> <u>iniziale</u>, <u>entrate</u> <u>totali</u>, <u>uscite</u> <u>totali</u>,<br>cash flow <u>netto</u> e <u>saldo</u> <u>finale</u>.</span></div></div>
          <div class="rw st"><div class="rh">24</div><div class="ca"></div><div class="cb">•</div><div class="cc clip"><span>La <u>tabella</u> <u>mensile</u> <u>riepiloga</u> <u>entrate</u>, <u>uscite</u>, cash flow e <u>saldo</u> <u>progressivo</u> per<br><u>ogni</u> <u>mese</u>.</span></div></div>
          <div class="rw"><div class="rh">25</div><div class="ca"></div><div class="cb">•</div><div class="cc"><span><u>Il</u> <u>grafico</u> a <u>linee</u> <u>mostra</u> <u>l'evoluzione</u> <u>del</u> <u>saldo</u> <u>nel</u> tempo.</span></div></div>
          <div class="rw st"><div class="rh">26</div><div class="ca"></div><div class="cb">•</div><div class="cc"><span><u>Il</u> <u>grafico</u> a <u>colonne</u> <u>confronta</u> <u>entrate</u> e <u>uscite</u> <u>mese</u> per <u>mese</u>.</span></div></div>
          <div class="rw"><div class="rh">27</div><div class="ca"></div><div class="cb">•</div><div class="cc"><span>I <u>mesi</u> con <u>saldo</u> <u>negativo</u> <u>sono</u> <u>evidenziati</u> in <u>rosso</u>: <u>richiedono</u> <u>azioni</u> <u>correttive</u>.</span></div></div>
          <div class="rw st"><div class="rh">28</div><div class="ca"></div><div class="cb">•</div><div class="cc"><span><u>Il</u> <u>campo</u> <u>'Mese</u> con <u>saldo</u> <u>minimo'</u> <u>indica</u> <u>il</u> <u>mese</u> <u>più</u> <u>critico</u> per la <u>liquidità</u>.</span></div></div>
          <div class="rw"><div class="rh">29</div></div>

          <div class="rw r18"><div class="rh">30</div><div class="ca"></div><div class="head-cell"><span>4. <u>SIGNIFICATO</u> <u>DEGLI</u> <u>STATI</u></span></div></div>
          <div class="rw"><div class="rh">31</div><div class="ca"></div><div class="cb">•</div><div class="cc clip"><span><u>Previsto</u>: <u>movimento</u> <u>pianificato</u> ma non <u>ancora</u> <u>confermato</u>. <u>Colore</u> <u>di</u> <u>sfondo</u><br><u>giallo</u> <u>tenue</u>.</span></div></div>
          <div class="rw st"><div class="rh">32</div><div class="ca"></div><div class="cb">•</div><div class="cc clip"><span><u>Confermato</u>: <u>accordo</u> <u>raggiunto</u> con <u>cliente/fornitore</u> ma non <u>ancora</u><br><u>incassato/pagato</u>.</span></div></div>
          <div class="rw"><div class="rh">33</div><div class="ca"></div><div class="cb">•</div><div class="cc"><span><u>Incassato</u>: <u>denaro</u> <u>effettivamente</u> <u>ricevuto</u>. <u>Riga</u> <u>evidenziata</u> in <u>verde</u>.</span></div></div>
          <div class="rw st"><div class="rh"></div><div class="ca"></div><div class="cb"></div><div class="cc"></div></div>
        </div>
        <div class="v-scroll"><div class="v-thumb"></div></div>
      </div>
      <div class="h-scroll"><div class="h-thumb"></div><div class="h-end"></div></div>
      <div class="tab-bar d-flex align-items-center">
        <span class="tab-nav"><svg width="60" height="11" viewBox="0 0 60 11"><g fill="none" stroke="#cfcdca"><path d="M1 1v9M10 1L3 5.500l7 4.500zM19 1l-7 4.500 7 4.500zM27 1l-7 4.500 7 4.500zM33 1l7 4.500-7 4.500zM41 1l7 4.500-7 4.500zM49 1l7 4.500-7 4.500zM58 1v9"/></g></svg></span>
        <span class="tab-add"><svg width="13" height="14" viewBox="0 0 13 14"><path d="M2 1h6l3 3v9H2z" fill="#fff" stroke="#ccc"/><circle cx="6.500" cy="8" r="2" fill="#3d87c9"/></svg></span>
        <span class="sheet-tab now">Istruzioni</span>
        <span class="sheet-tab tab-p">Parametri</span><span class="tab-sep"></span>
        <span class="sheet-tab tab-i">Inserimento</span><span class="tab-sep"></span>
        <span class="sheet-tab tab-d">Dashboard</span><span class="tab-sep"></span>
      </div>
    </div>
    <aside class="side-bar d-flex flex-column">
      <div class="side-icon"><svg viewBox="0 0 18 18"><path d="M3 4h12M3 8.500h12M3 13h12" stroke="#333" stroke-width="1.500"/></svg></div>
      <div class="side-icon"><svg viewBox="0 0 18 18"><rect x="2" y="2" width="14" height="14" fill="#fff" stroke="#555"/><rect x="2" y="2" width="14" height="2" fill="#555"/><path d="M5 8h8M5 12h8" stroke="#3d87c9"/><path d="M10 7v2M7 11v2" stroke="#3d87c9"/></svg></div>
      <div class="side-icon"><svg viewBox="0 0 18 18"><text x="1" y="13" font-size="14" font-family="Noto Sans" fill="#444">A</text><path d="M8 15c1-3 4-7 8-10-1 4-3 8-6 10z" fill="#3d87c9"/></svg></div>
      <div class="side-icon"><svg viewBox="0 0 18 18"><path d="M1 15V3h6l2 2h7v3H4v7z" fill="#f4c06a" stroke="#d9953a" stroke-width=".8"/><rect x="6" y="8" width="11" height="8" fill="#dbeaf6" stroke="#3d87c9"/><path d="M7 15l3-3 2 2 2-2 2 3z" fill="#3d87c9"/></svg></div>
      <div class="side-icon"><svg viewBox="0 0 18 18"><circle cx="9" cy="9" r="7" fill="#fff" stroke="#666"/><path d="M13 5l-6 2.500L5 13l6-2.500z" fill="#3d87c9"/></svg></div>
      <div class="side-icon"><svg viewBox="0 0 18 18"><text x="2" y="14" font-size="15" font-style="italic" font-family="Liberation Serif" fill="#3d87c9">fx</text></svg></div>
    </aside>
  </div>

  <footer class="status-bar d-flex">
    <div class="sc st-1"><svg width="13" height="13" viewBox="0 0 13 13"><path d="M1.500 1.500h10v10h-10z" fill="none" stroke="#999"/><path d="M4 1.500v3h5v-3M3.500 11.500v-4h6v4" fill="none" stroke="#999"/></svg><span>Sheet 1 of 4</span></div>
    <div class="sc st-2">Selected: 1 row, 8 columns</div>
    <div class="sc st-3">PageStyle_Istruzioni</div>
    <div class="sc justify-content-center st-4">English (USA)</div>
    <div class="sc st-5"></div>
    <div class="sc justify-content-center st-6"><svg width="22" height="12" viewBox="0 0 22 12"><rect x=".500" y="2" width="11" height="8" fill="#e9f2fa" stroke="#3d87c9"/><path d="M17 1v10M15 1h4M15 11h4" stroke="#555"/></svg></div>
    <div class="sc st-7"></div>
    <div class="sc st-8"></div>
    <div class="sc justify-content-center st-9">Average: ; Sum: 0</div>
    <div class="sc st-10"><svg width="92" height="12" viewBox="0 0 92 12"><path d="M0 6h6M86 6h7M89.500 2.500v7" stroke="#333" stroke-width="1.200"/><path d="M11 6h65" stroke="#999"/><rect x="41" y="2" width="3" height="8" fill="#fff" stroke="#666"/></svg></div>
    <div class="sc justify-content-center st-11">100%</div>
  </footer>
  <div class="drag-handle"></div>
</div>
<script src="https://cdn.jsdelivr.net/npm/bootstrap@5.3.0/dist/js/bootstrap.bundle.min.js"></script>
</body>
</html>
